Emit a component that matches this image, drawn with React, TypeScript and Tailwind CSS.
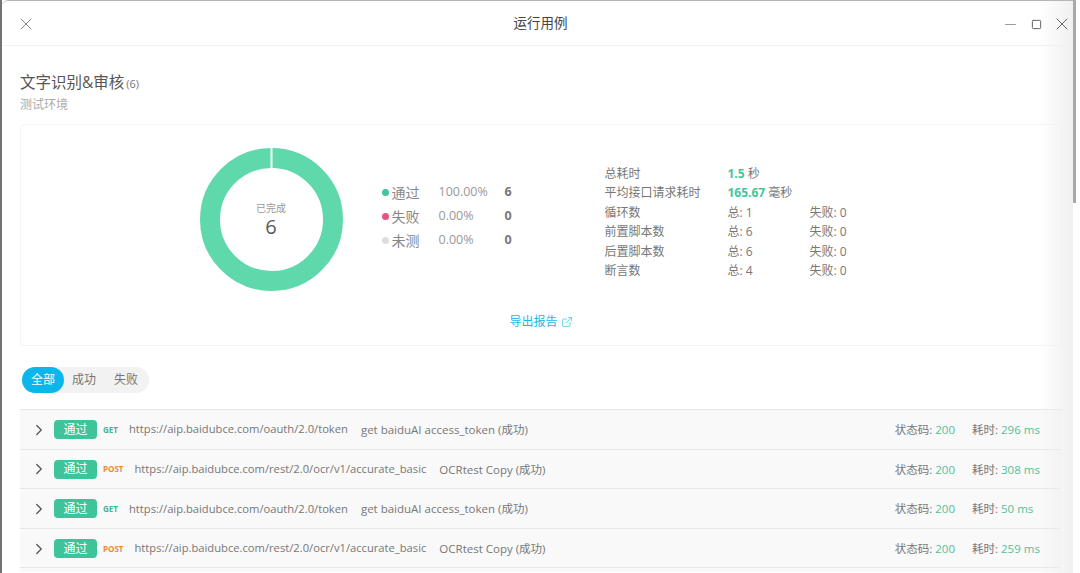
import { X, Minus, Square, ChevronRight, ExternalLink } from "lucide-react";

const font = "font-['Open_Sans','Noto_Sans_CJK_SC',sans-serif]";

const legend = [
  { dot: "bg-[#3fc79a]", label: "通过", pct: "100.00%", count: "6" },
  { dot: "bg-[#e8547f]", label: "失败", pct: "0.00%", count: "0" },
  { dot: "bg-[#dddddd]", label: "未测", pct: "0.00%", count: "0" },
];

const counts = [
  { label: "循环数", total: "总: 1", failed: "失败: 0" },
  { label: "前置脚本数", total: "总: 6", failed: "失败: 0" },
  { label: "后置脚本数", total: "总: 6", failed: "失败: 0" },
  { label: "断言数", total: "总: 4", failed: "失败: 0" },
];

const rows = [
  { method: "GET", url: "https://aip.baidubce.com/oauth/2.0/token", name: "get baiduAI access_token (成功)", time: "296 ms" },
  { method: "POST", url: "https://aip.baidubce.com/rest/2.0/ocr/v1/accurate_basic", name: "OCRtest Copy (成功)", time: "308 ms" },
  { method: "GET", url: "https://aip.baidubce.com/oauth/2.0/token", name: "get baiduAI access_token (成功)", time: "50 ms" },
  { method: "POST", url: "https://aip.baidubce.com/rest/2.0/ocr/v1/accurate_basic", name: "OCRtest Copy (成功)", time: "259 ms" },
];

function Donut() {
  return (
    <div className="relative w-[143px] h-[143px] shrink-0">
      <svg width="143" height="143" viewBox="0 0 143 143">
        <circle cx="71.5" cy="71.5" r="61.5" fill="none" stroke="#5fd9ab" strokeWidth="20" />
        <rect x="70.5" y="0" width="2" height="21" fill="#ffffff" />
      </svg>
      <div className="absolute inset-0 flex flex-col items-center justify-center pt-[3px]">
        <span className="text-[10px] leading-[12px] text-[#999999]">已完成</span>
        <span className="text-[20px] leading-[26px] text-[#595959]">6</span>
      </div>
    </div>
  );
}

export default function App() {
  return (
    <div className={`${font} flex w-[1080px] h-[573px] overflow-hidden bg-white`}>
      <div className="w-[2px] shrink-0 bg-[#6f7478]" />

      {/* Modal */}
      <div className="relative flex flex-col w-[1071px] shrink-0 border-t border-[#b5b5b5] rounded-tl-md bg-white">
        <div className="absolute top-0 right-0 bottom-0 w-[34px] bg-gradient-to-r from-white/0 to-[#f0f0f0] pointer-events-none" />

        <header className="relative flex items-center justify-center h-[45px] shrink-0 pl-[6px] border-b border-[#f0f0f0]">
          <X size={20} strokeWidth={1.1} className="absolute left-[13.5px] top-[13px] text-[#777777]" />
          <span className="text-[13.5px] text-[#444444]">运行用例</span>
          <Minus size={17} strokeWidth={1.2} className="absolute left-[999.5px] top-[15px] text-[#888888]" />
          <Square size={11} strokeWidth={2} className="absolute left-[1028.5px] top-[18px] text-[#555555]" />
          <X size={20} strokeWidth={1.2} className="absolute left-[1049.5px] top-[13px] text-[#666666]" />
        </header>

        <main className="flex flex-col pl-[18px] w-[1060px]">
          <div className="flex items-baseline mt-[25px] h-[22px]">
            <span className="text-[15.5px] leading-[22px] text-[#555555]">文字识别&审核</span>
            <span className="ml-[2px] text-[11px] text-[#777777]">(6)</span>
          </div>
          <div className="mt-[3px] text-[12px] leading-[18px] text-[#aaaaaa]">测试环境</div>

          {/* Summary card */}
          <section className="flex flex-col mt-[10px] h-[222px] border border-[#f5f5f5] rounded-sm">
            <div className="flex pl-[178.5px] pt-[23px]">
              <Donut />
              <div className="flex flex-col gap-[4px] ml-[39px] mt-[34px] w-[140px]">
                {legend.map((l) => (
                  <div key={l.label} className="flex items-center h-[20px]">
                    <span className={`w-[7px] h-[7px] rounded-full shrink-0 ${l.dot}`} />
                    <span className="ml-[3px] w-[47px] text-[14px] text-[#888888]">{l.label}</span>
                    <span className="w-[66px] text-[12.5px] text-[#999999]">{l.pct}</span>
                    <span className="text-[12.5px] font-bold text-[#777777]">{l.count}</span>
                  </div>
                ))}
              </div>
              <div className="flex flex-col ml-[83px] mt-[16px] text-[12px] leading-[19.4px] text-[#777777]">
                <div className="flex">
                  <span className="w-[123px]">总耗时</span>
                  <span><b className="text-[#3fc79a]">1.5</b> 秒</span>
                </div>
                <div className="flex">
                  <span className="w-[123px]">平均接口请求耗时</span>
                  <span><b className="text-[#3fc79a]">165.67</b> 毫秒</span>
                </div>
                {counts.map((c) => (
                  <div key={c.label} className="flex">
                    <span className="w-[123px]">{c.label}</span>
                    <span className="w-[82px]">{c.total}</span>
                    <span>{c.failed}</span>
                  </div>
                ))}
              </div>
            </div>
            <div className="flex items-center justify-center gap-[3px] mt-[22px] text-[12px] leading-[18px] text-[#1cb8e0]">
              导出报告
              <ExternalLink size={12} strokeWidth={1.2} />
            </div>
          </section>

          {/* Filter tabs */}
          <div className="flex items-center self-start ml-[2px] mt-[21px] h-[26px] w-[127px] rounded-full bg-[#f2f2f2] text-[12px] text-[#777777]">
            <span className="flex items-center justify-center w-[42px] h-[26px] rounded-full bg-[#0bb7ea] text-white">全部</span>
            <span className="ml-[8px]">成功</span>
            <span className="ml-[18px]">失败</span>
          </div>

          {/* Results */}
          <div className="flex flex-col mt-[16px]">
            {rows.map((r, i) => (
              <div key={i} className="flex items-center h-[39.6px] pl-[10px] pr-[23px] pt-[1px] border-t border-[#e6e6e6] bg-[#f9f9f9] text-[11.5px] text-[#777777]">
                <ChevronRight size={18} strokeWidth={1.7} className="shrink-0 text-[#555555]" />
                <span className="flex items-center justify-center ml-[6px] w-[43px] h-[19px] rounded-[4px] bg-[#3fc39a] text-[12px] text-white">通过</span>
                {r.method === "GET" ? (
                  <span className="ml-[6px] w-[26px] text-[8px] font-bold text-[#45b58f]">GET</span>
                ) : (
                  <span className="ml-[6px] w-[31.5px] text-[8px] font-bold text-[#ee8a36]">POST</span>
                )}
                <span className="text-[11.2px]">{r.url}</span>
                <span className="ml-[13px]">{r.name}</span>
                <span className="ml-auto">状态码: <span className="text-[#52bf9a]">200</span></span>
                <span className="w-[67px] ml-[17px] whitespace-nowrap">耗时: <span className="text-[#52bf9a]">{r.time}</span></span>
              </div>
            ))}
            <div className="border-t border-[#e6e6e6] h-[5px] bg-[#f9f9f9]" />
          </div>
        </main>
      </div>

      <div className="flex flex-col shrink-0 w-[7px]">
        <div className="h-[203px] w-[3px] bg-[#a9a9a9]" />
      </div>
    </div>
  );
}
